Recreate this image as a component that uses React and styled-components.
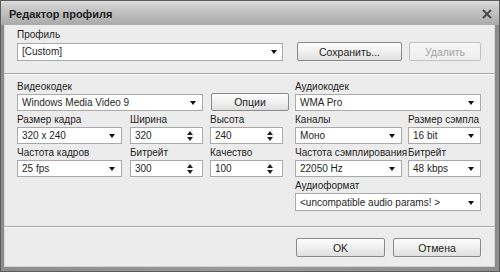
import React from 'react'
import styled, { createGlobalStyle } from 'styled-components'

const GlobalStyle = createGlobalStyle`
  html, body {
    margin: 0;
    padding: 0;
    background: #ffffff;
  }
  body {
    font-family: "Liberation Sans", Arial, sans-serif;
    font-size: 10px;
    color: #1e1e1e;
  }
`;

const Window = styled.div`
  width: 500px;
  height: 272px;
  box-sizing: border-box;
  display: flex;
  flex-direction: column;
  border: 1px solid #5c5c5c;
  background: linear-gradient(to right, #8c8c8c, #9a9a9a 50%, #8c8c8c);
`;

const TitleBar = styled.div`
  height: 24px;
  flex: none;
  display: flex;
  align-items: center;
  justify-content: space-between;
  padding: 0 7px 0 8px;
  background: linear-gradient(#dcdcdc 0%, #c6c6c6 35%, #b2b2b2 80%, #a9a9a9 100%);
`;

const Title = styled.span`
  font-size: 11px;
  font-weight: bold;
  color: #1c1c1c;
  margin-top: 2px;
`;

const Close = styled.svg`
  width: 10px;
  height: 10px;
  margin-top: 1px;
`;

const Body = styled.div`
  flex: 1;
  margin: 0 4px 4px 3px;
  background: #ececec;
  box-shadow: inset 1px 0 0 #d4d4d4, inset -1px 0 0 #d4d4d4, inset 0 -1px 0 #d4d4d4;
  display: flex;
  flex-direction: column;
`;

const ProfileSection = styled.div`
  padding: 3px 14px 12px 13px;
  display: flex;
  flex-direction: column;
`;

const ProfileRow = styled.div`
  display: flex;
  align-items: center;
`;

const Divider = styled.div`
  height: 1px;
  flex: none;
  background: #a9a9a9;
  border-bottom: 1px solid #fafafa;
`;

const CodecSection = styled.div`
  flex: 1;
  padding: 5px 14px 0 13px;
  display: grid;
  grid-template-columns: 272px 186px;
  column-gap: 6px;
  align-items: start;
`;

const Column = styled.div`
  display: flex;
  flex-direction: column;
  gap: 2px;
`;

const Row = styled.div`
  display: flex;
  align-items: flex-end;
  gap: ${p => p.gap || 0}px;
`;

const Field = styled.div`
  width: ${p => p.width}px;
  display: flex;
  flex-direction: column;
`;

const Label = styled.div`
  height: 14px;
  line-height: 14px;
  white-space: nowrap;
`;

const Box = styled.div`
  width: ${p => p.width ? `${p.width}px` : 'auto'};
  height: ${p => p.height || 17}px;
  box-sizing: border-box;
  border: 1px solid #a9a9a9;
  background: #ffffff;
  display: flex;
  align-items: center;
  justify-content: space-between;
  padding: 0 ${p => p.arrowRight || 6}px 0 4px;
  white-space: nowrap;
`;

const Arrow = styled.span`
  width: 0;
  height: 0;
  border-left: 3.5px solid transparent;
  border-right: 3.5px solid transparent;
  border-top: 4px solid #111;
  margin-top: 1px;
`;

const Spin = styled.span`
  display: flex;
  flex-direction: column;
  gap: 2px;
  margin-right: 1px;
`;

const SpinArrow = styled.span`
  width: 0;
  height: 0;
  border-left: 3px solid transparent;
  border-right: 3px solid transparent;
  ${p => p.up ? 'border-bottom: 4px solid #222;' : 'border-top: 4px solid #222;'}
`;

const Button = styled.div`
  width: ${p => p.width}px;
  height: ${p => p.height || 19}px;
  box-sizing: border-box;
  flex: none;
  margin-left: ${p => p.ml || 0}px;
  border: 1px solid ${p => p.disabled ? '#c2c2c2' : '#8a8a8a'};
  border-radius: 2px;
  background: ${p => p.disabled
    ? 'linear-gradient(#f7f7f7, #eeeeee)'
    : 'linear-gradient(#fdfdfd 0%, #f0f0f0 50%, #dfdfdf 100%)'};
  color: ${p => p.disabled ? '#a4a4a4' : '#1e1e1e'};
  display: flex;
  align-items: center;
  justify-content: center;
  font-size: 10.5px;
`;

const Footer = styled.div`
  flex: none;
  display: flex;
  justify-content: flex-end;
  padding: 10px 14px 10px 0;
`;

const Combo = ({ width, height, arrowRight, children }) => (
  <Box width={width} height={height} arrowRight={arrowRight}>
    <span>{children}</span>
    <Arrow />
  </Box>
);

const Spinner = ({ width, children }) => (
  <Box width={width} arrowRight={8}>
    <span>{children}</span>
    <Spin>
      <SpinArrow up />
      <SpinArrow />
    </Spin>
  </Box>
);

export default function App() {
  return (
    <>
      <GlobalStyle />
      <Window>
        <TitleBar>
          <Title>Редактор профиля</Title>
          <Close viewBox="0 0 10 10">
            <path d="M1 1 L9 9 M9 1 L1 9" stroke="#4a4a4a" strokeWidth="2" />
          </Close>
        </TitleBar>
        <Body>
          <ProfileSection>
            <Label>Профиль</Label>
            <ProfileRow>
              <Combo width={266} height={18} arrowRight={5}>[Custom]</Combo>
              <Button width={105} ml={14}>Сохранить...</Button>
              <Button width={72} ml={7} disabled>Удалить</Button>
            </ProfileRow>
          </ProfileSection>
          <Divider />
          <CodecSection>
            <Column>
              <Row gap={8}>
                <Field width={186}>
                  <Label>Видеокодек</Label>
                  <Combo width={186}>Windows Media Video 9</Combo>
                </Field>
                <Button width={78} height={18}>Опции</Button>
              </Row>
              <Row>
                <Field width={113}>
                  <Label>Размер кадра</Label>
                  <Combo width={105}>320 x 240</Combo>
                </Field>
                <Field width={80}>
                  <Label>Ширина</Label>
                  <Spinner width={73}>320</Spinner>
                </Field>
                <Field width={73}>
                  <Label>Высота</Label>
                  <Spinner width={73}>240</Spinner>
                </Field>
              </Row>
              <Row>
                <Field width={113}>
                  <Label>Частота кадров</Label>
                  <Combo width={105}>25 fps</Combo>
                </Field>
                <Field width={80}>
                  <Label>Битрейт</Label>
                  <Spinner width={73}>300</Spinner>
                </Field>
                <Field width={73}>
                  <Label>Качество</Label>
                  <Spinner width={73}>100</Spinner>
                </Field>
              </Row>
            </Column>
            <Column>
              <Field width={186}>
                <Label>Аудиокодек</Label>
                <Combo width={186}>WMA Pro</Combo>
              </Field>
              <Row gap={6}>
                <Field width={107}>
                  <Label>Каналы</Label>
                  <Combo width={107}>Моно</Combo>
                </Field>
                <Field width={73}>
                  <Label>Размер сэмпла</Label>
                  <Combo width={73}>16 bit</Combo>
                </Field>
              </Row>
              <Row gap={6}>
                <Field width={107}>
                  <Label>Частота сэмплирования</Label>
                  <Combo width={107}>22050 Hz</Combo>
                </Field>
                <Field width={73}>
                  <Label>Битрейт</Label>
                  <Combo width={73}>48 kbps</Combo>
                </Field>
              </Row>
              <Field width={186}>
                <Label>Аудиоформат</Label>
                <Combo width={186} height={18}>&lt;uncompatible audio params! &gt;</Combo>
              </Field>
            </Column>
          </CodecSection>
          <Divider />
          <Footer>
            <Button width={89}>OK</Button>
            <Button width={88} ml={8}>Отмена</Button>
          </Footer>
        </Body>
      </Window>
    </>
  );
}
